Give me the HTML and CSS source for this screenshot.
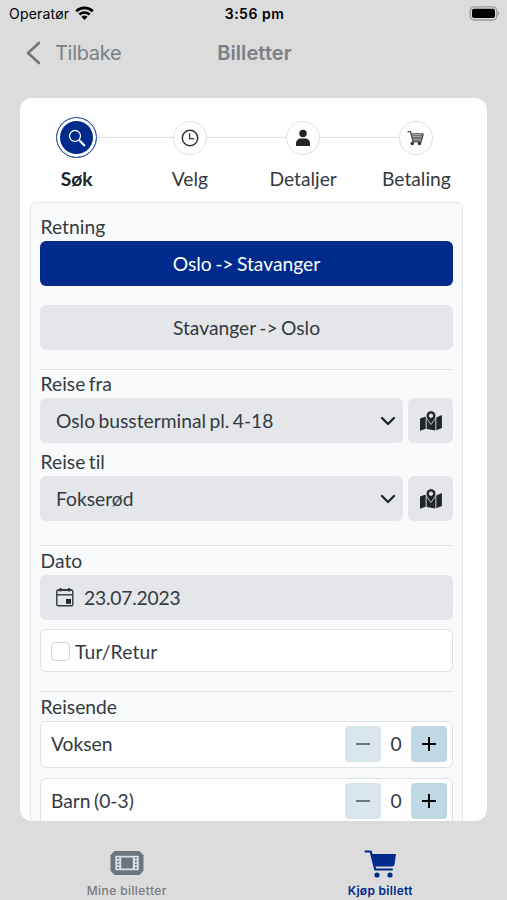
FILE: index.html
```html
<!DOCTYPE html>
<html lang="no">
<head>
<meta charset="utf-8">
<title>Billetter</title>
<link rel="stylesheet" href="styles.css">
</head>
<body>
<svg class="defs" width="0" height="0">
  <symbol id="map" viewBox="0 0 24 22">
    <path d="M1 8.500 6.700 6.500v12.300L1 20.800zM7.600 7l1.400.8 3 5 3-5 1.400-.5V20.500l-8.800-1.500zM17.300 7.500 22.900 5v13l-5.600 2.300z"/>
    <path fill-rule="evenodd" stroke="#e4e6ea" stroke-width=".8" d="M12 14.500C9.500 11 7.100 8.200 7.100 5.700a4.900 4.900 0 0 1 9.800 0c0 2.500-2.400 5.300-4.900 8.800zM12 3.900a1.800 1.800 0 1 0 0 3.600 1.800 1.800 0 0 0 0-3.600z"/>
  </symbol>
</svg>
<div class="phone">
  <header class="status">
    <div class="carrier"><span>Operatør</span>
      <svg width="19" height="14" viewBox="0 0 19 14" fill="none" stroke="#000" stroke-width="2.600"><path d="M1.200 5.200a12 12 0 0 1 16.600 0M4.400 8.500a7.400 7.400 0 0 1 10.200 0"/><path fill="#000" stroke="none" d="M6.400 10.800a4.700 4.700 0 0 1 6.200 0L9.500 14z"/></svg>
    </div>
    <div class="time">3:56 pm</div>
    <svg class="battery" width="32" height="15" viewBox="0 0 32 15"><rect x="2.300" y=".8" width="26.500" height="13.200" rx="4" fill="none" stroke="#999" stroke-width="1.300"/><rect x="4" y="2.700" width="23" height="9.400" rx="2" fill="#000"/><path fill="#999" d="M30 5.200q2.400 2.200 0 4.400z"/></svg>
  </header>
  <nav class="nav">
    <div class="back"><svg width="16" height="24" viewBox="0 0 16 24" fill="none" stroke="#6c757d" stroke-width="2.600" stroke-linecap="round" stroke-linejoin="round"><path d="M14 2 3 12l11 10"/></svg><span>Tilbake</span></div>
    <h1>Billetter</h1>
  </nav>
  <main class="card">
    <ol class="steps">
      <li class="step active"><div class="dot"><svg width="20" height="20" viewBox="0 0 20 20" fill="none" stroke="#fff"><circle cx="8" cy="8" r="5.500" stroke-width="1.300"/><path d="m12 12 1.800 1.800" stroke-width="1.500"/><path d="m13.500 13.500 3.700 3.700" stroke-width="2.300" stroke-linecap="round"/></svg></div><span>Søk</span></li>
      <li class="step"><div class="dot"><svg width="20" height="20" viewBox="0 0 20 20" fill="none" stroke="#333" stroke-width="1.500"><circle cx="10" cy="10" r="7.700"/><path d="M9.600 5.300v5.300h4.600" stroke-width="1.300"/></svg></div><span>Velg</span></li>
      <li class="step"><div class="dot"><svg width="20" height="20" viewBox="0 0 20 20" fill="#212529"><circle cx="10" cy="5.500" r="3.700"/><path d="M3 18v-2.300C3 12.500 5 10.500 8 10.500h4c3 0 5 2 5 5.200V18z"/></svg></div><span>Detaljer</span></li>
      <li class="step"><div class="dot"><svg width="20" height="20" viewBox="0 0 20 20" fill="none" stroke="#444" stroke-width="1.300"><path d="M1.500 3.700h3l2.600 10.200H16M5.500 5.800h11.900M6 7.900h10.700M6.500 10h9.700M7 12.100h8.600l1.600-6.300"/><g fill="#333" stroke="none"><circle cx="6.300" cy="15.500" r="1.700"/><circle cx="13.500" cy="15.500" r="1.700"/></g></svg></div><span>Betaling</span></li>
    </ol>
    <form class="panel">
      <section>
        <label>Retning</label>
        <div class="choice chosen">Oslo -&gt; Stavanger</div>
        <div class="choice">Stavanger -&gt; Oslo</div>
      </section>
      <section class="places">
        <label>Reise fra</label>
        <div class="pick"><div class="field"><span>Oslo bussterminal pl. 4-18</span><svg width="16" height="10" viewBox="0 0 16 10"><path d="m2 2 6 6 6-6"/></svg></div><div class="map"><svg width="24" height="22"><use href="#map"/></svg></div></div>
        <label>Reise til</label>
        <div class="pick"><div class="field"><span>Fokserød</span><svg width="16" height="10" viewBox="0 0 16 10"><path d="m2 2 6 6 6-6"/></svg></div><div class="map"><svg width="24" height="22"><use href="#map"/></svg></div></div>
      </section>
      <section class="when">
        <label>Dato</label>
        <div class="date"><svg width="20" height="21" viewBox="0 0 20 21" fill="none" stroke="#343a40" stroke-width="1.400"><rect x="1.800" y="3" width="16" height="15.800" rx="1.500"/><path d="M2 7.800h15.600"/><path d="M5.500 1v3.600M14 1v3.600M3 2.900h13.500" stroke-width="2"/><path fill="#212529" stroke="none" d="M11 12h5v4.800h-5z"/></svg><span>23.07.2023</span></div>
        <div class="check"><i></i><span>Tur/Retur</span></div>
      </section>
      <section class="people">
        <label>Reisende</label>
        <div class="person"><span>Voksen</span><div class="count"><b class="minus"></b><span>0</span><b class="plus"></b></div></div>
        <div class="person"><span>Barn (0-3)</span><div class="count"><b class="minus"></b><span>0</span><b class="plus"></b></div></div>
      </section>
    </form>
  </main>
  <footer class="tabs">
    <div class="tab"><svg width="36" height="32" viewBox="0 0 36 32"><path fill="#6c757d" d="M5.500 4h25l4 4.200v15.600l-4 4.200h-25l-4-4.200V8.200z"/><path fill="#dbe2e8" d="M6.300 8.800h23.400v14.400H6.300z"/><path fill="#6c757d" d="M12.200 10.500h11.600v11H12.200zM8.200 10.300h2V12h-2zM8.200 13.500h2v1.800h-2zM8.200 16.800h2v1.800h-2zM8.200 20h2v1.700h-2zM25.800 10.300h2V12h-2zM25.800 13.500h2v1.800h-2zM25.800 16.800h2v1.800h-2zM25.800 20h2v1.700h-2z"/></svg><span>Mine billetter</span></div>
    <div class="tab current"><svg width="36" height="32" viewBox="0 0 36 32"><path fill="none" stroke="#002b8c" stroke-width="2.200" stroke-linecap="round" stroke-linejoin="round" d="M3.500 4.500h5.200l4.500 18H30"/><path fill="#002b8c" d="M9.500 7h24.500l-1.500 10.500q-.3 2-2.300 2H12.500z"/><circle cx="15" cy="28" r="2.600" fill="#002b8c"/><circle cx="28" cy="28" r="2.600" fill="#002b8c"/></svg><span>Kjøp billett</span></div>
  </footer>
</div>
</body>
</html>
```
FILE: styles.css
```css
* { box-sizing: border-box; }
body { margin: 0; background: #dcdcdc; color: #343a40; font: 19.25px/28px Lato, sans-serif; word-spacing: -1.5px; font-variant-ligatures: none; }
svg { display: block; flex: none; }
.defs { position: absolute; }
.phone { width: 507px; height: 900px; overflow: hidden; display: flex; flex-direction: column; }
.status, .nav, .tabs { word-spacing: 0; }
.status { height: 28px; display: grid; grid-template-columns: 1fr auto 1fr; align-items: center; padding: 0 7px 0 9px; color: #000; font: 14px/28px Inter, sans-serif; }
.carrier { display: flex; align-items: center; gap: 6px; letter-spacing: .2px; }
.carrier svg { margin-top: -3px; }
.time { font-weight: 600; letter-spacing: .5px; }
.battery { justify-self: end; margin-top: -2px; }
.nav { height: 50px; display: grid; grid-template-columns: 181px 147px 179px; align-items: center; color: #7a8086; font: 20px/28px Inter, sans-serif; }
.back { display: flex; align-items: center; gap: 14px; padding-left: 25px; letter-spacing: -.3px; }
.nav h1 { margin: 0; font-size: 20px; font-weight: 600; letter-spacing: .1px; justify-self: center; }
.card { margin: 20px 20px 0; height: 723px; flex: none; background: #fff; border-radius: 12px; overflow: hidden; }
.steps { list-style: none; margin: 0; padding: 18px 14px 0 0; display: grid; grid-template-columns: repeat(4, 1fr); height: 104px; }
.step { display: flex; flex-direction: column; align-items: center; position: relative; line-height: 27px; }
.step + .step::before { content: ""; position: absolute; top: 21px; left: -40px; width: 80px; height: 1px; background: #dee2e6; }
.step:nth-child(2)::before { left: -36px; width: 76px; }
.dot { width: 34px; height: 34px; margin: 5px 0 10px; border: 1px solid #dee2e6; border-radius: 50%; display: grid; place-items: center; background: #fff; position: relative; }
.step > span { color: #343a40; }
.active .dot { width: 41px; height: 41px; margin: 1px 0 7px; background: #002b8c; border: 1px solid #3456a4; box-shadow: inset 0 0 0 3px #fff; }
.active > span { font-weight: 700; color: #212529; }
.panel { margin: 0 24px 0 10px; height: 650px; padding: 10px 9px 0; border: 1px solid #e4e7ea; border-radius: 6px; background: #f8fafc; }
label { display: block; height: 28px; padding-left: .6px; }
section + section { border-top: 1px solid #dfe2e6; }
.choice, .date, .field, .map { height: 45px; border-radius: 6px; background: #e4e6ea; }
.choice { display: flex; align-items: center; justify-content: center; margin-bottom: 19px; }
.chosen { background: #002b8c; color: #fff; }
.places { height: 176px; }
.pick { display: flex; gap: 5px; margin-bottom: 5px; }
.field { flex: 1; display: flex; align-items: center; justify-content: space-between; padding: 0 7px 0 16px; }
.field path { fill: none; stroke: #212529; stroke-width: 2.3; stroke-linecap: round; stroke-linejoin: round; }
.map { width: 45px; display: grid; place-items: center; fill: #212529; }
.when { padding-top: 1px; height: 146px; }
.date { display: flex; align-items: center; gap: 9px; padding-left: 15px; letter-spacing: -.2px; }
.check { height: 43px; margin-top: 9px; padding: 2px 0 0 10px; display: flex; align-items: center; gap: 5px; border: 1px solid #dee2e6; border-radius: 6px; background: #fff; }
.check span { letter-spacing: .15px; }
.check i { width: 19px; height: 19px; border: 1px solid #ced4da; border-radius: 4px; }
.people { padding-top: 1px; }
.person { height: 47px; margin-bottom: 10px; padding: 0 5px 1px 10px; display: flex; align-items: center; justify-content: space-between; background: #fff; border: 1px solid #dee2e6; border-radius: 6px; }
.count { display: grid; grid-template-columns: 36px 30px 36px; text-align: center; align-items: center; }
.count b { height: 36px; border-radius: 4px; }
.count .plus { background: linear-gradient(#000, #000) center / 14px 2px no-repeat, linear-gradient(#000, #000) center / 2px 14px no-repeat #bfd9e4; }
.count .minus { background: linear-gradient(#6b777e, #6b777e) center / 14px 2px no-repeat #d9e6eb; }
.tabs { flex: 1; display: grid; grid-template-columns: 1fr 1fr; padding-top: 26px; font: 500 12px/16px Inter, sans-serif; }
.tab { display: flex; flex-direction: column; align-items: center; gap: 4px; color: #757b81; letter-spacing: .4px; }
.current { color: #002b8c; font-weight: 600; letter-spacing: .3px; }
```
